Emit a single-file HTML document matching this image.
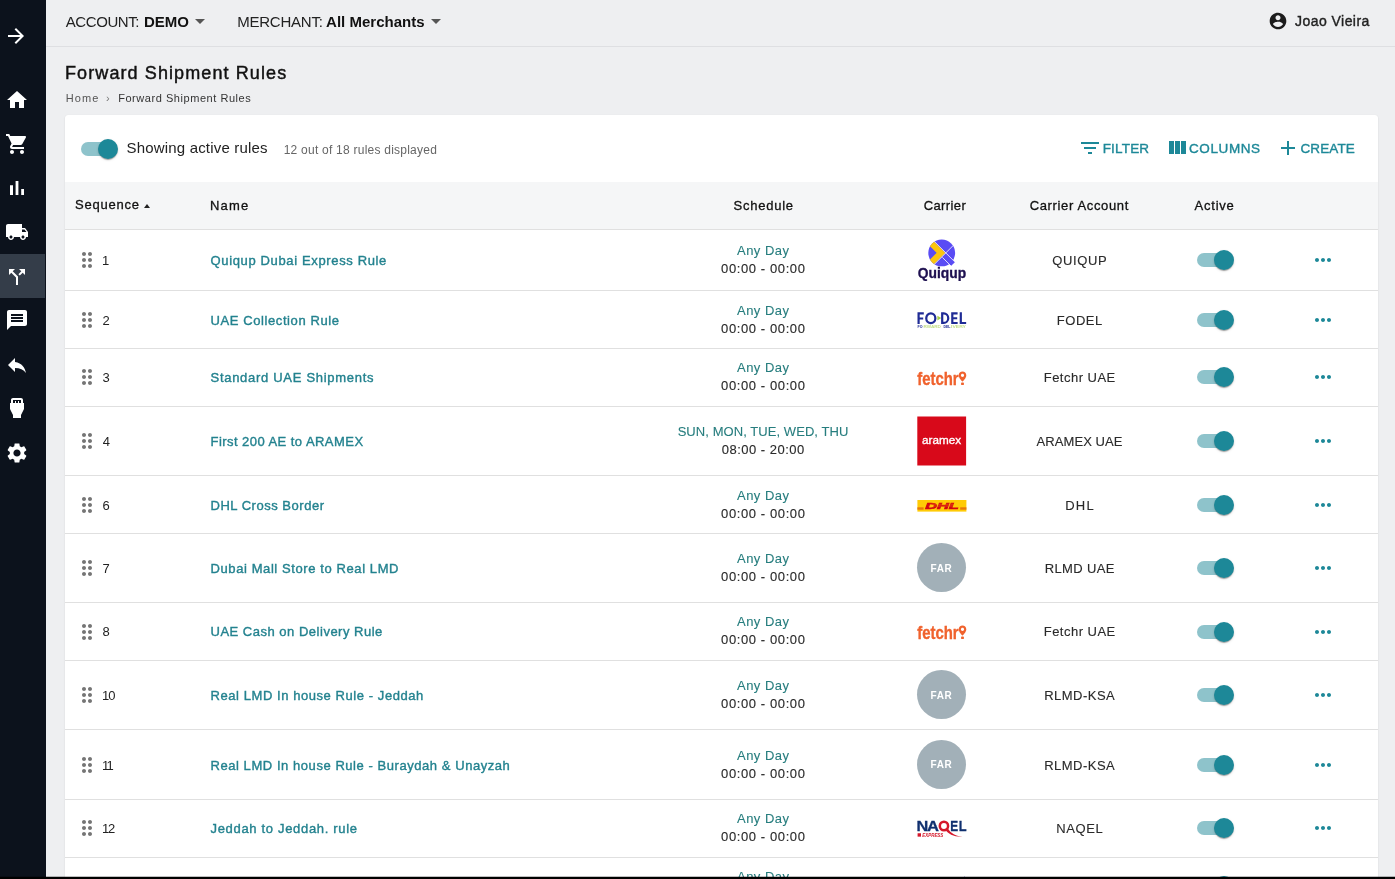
<!DOCTYPE html><html><head><meta charset="utf-8"><title>Forward Shipment Rules</title><style>
*{box-sizing:border-box;margin:0;padding:0}
html,body{width:1395px;height:879px;overflow:hidden}
body{background:#eeeff1;font-family:"Liberation Sans",sans-serif;color:#222;position:relative}
span{white-space:nowrap}
svg{display:block}
.wrap{position:absolute;left:0;top:0;width:1395px;height:879px;will-change:transform;overflow:hidden}
.side{position:absolute;left:0;top:0;width:46px;height:879px;background:#0c121c}
.side .act{position:absolute;left:0;top:254px;width:45px;height:44px;background:#343d49}
.side .ic{position:absolute;width:24px;height:24px}
.top{position:absolute;left:46px;top:0;right:0;height:47px;border-bottom:1px solid #dedfe2}
.top .it{position:absolute;top:0;height:42px;display:flex;align-items:center}
.caret{position:absolute;width:0;height:0;border-left:5px solid transparent;border-right:5px solid transparent;border-top:5px solid #555;top:19px}
h1{position:absolute;left:65px;top:55px;height:26px;line-height:26px;font-weight:400;color:#111}
.crumbs{position:absolute;left:65px;top:90px;height:16px;line-height:16px;color:#555}
.crumbs span{position:absolute;top:0}
.card{position:absolute;left:65px;top:115px;width:1313px;height:800px;background:#fff;border-radius:3px 3px 0 0;box-shadow:0 1px 2px rgba(0,0,0,.10),0 0 1px rgba(0,0,0,.10)}
.toolbar{position:relative;height:67px}
.toolbar .abs{position:absolute}
.thead{position:relative;height:48px;background:#f5f6f7;border-bottom:1px solid #e0e0e0;color:#111}
.thead span.h{position:absolute;top:0;height:47px;display:flex;align-items:center}
.row{position:relative;border-bottom:1px solid #e0e0e0;box-sizing:content-box}
.cell{position:absolute;height:19px;line-height:19px;font-size:13px}
.drag{position:absolute;left:10px}
.seq{left:37.500px;color:#222}
.name{left:145.500px;color:#23828f}
.sched{position:absolute;left:548px;width:300px;text-align:center;height:36px;font-size:13px}
.sched .s1{color:#267d7e;-webkit-text-stroke:0.1px #267d7e;height:18px;line-height:17px}
.sched .s2{color:#2a2a2a;-webkit-text-stroke:0.12px #2a2a2a;height:18px;line-height:17px}
.logo{position:absolute;left:851.500px}
.far{width:49px;height:49px;border-radius:50%;background:#a2b0b8;left:852px;color:#fff;font-weight:700;font-size:10px;letter-spacing:.6px;display:flex;align-items:center;justify-content:center}
.far span{margin-right:-.6px;position:relative;top:.5px;left:-.3px}
.acct{left:914.500px;width:200px;text-align:center;color:#2a2a2a;-webkit-text-stroke:0.12px #2a2a2a}
.rsw{position:absolute;left:1120px}
.more{position:absolute;left:1246px}
.sw{position:relative;display:block;width:58px;height:38px}
.sw .trk{position:absolute;left:12px;top:12px;width:34px;height:14px;border-radius:7px;background:#1d8898;opacity:.5}
.sw .thb{position:absolute;left:29px;top:9px;width:20px;height:20px;border-radius:50%;background:#1d8898;box-shadow:0 2px 1px -1px rgba(0,0,0,.2),0 1px 1px 0 rgba(0,0,0,.14),0 1px 3px 0 rgba(0,0,0,.12)}
.btn{position:absolute;top:21px;height:24px;color:#1d8898;display:flex;align-items:center}
.black{position:absolute;left:0;top:877px;width:1395px;height:2px;background:#000}
.black2{position:absolute;left:0;top:876px;width:1395px;height:1px;background:rgba(0,0,0,.25)}
</style></head><body><div class="wrap">
<div class="side"><div class="act"></div>
<span class="ic" style="left:4.0px;top:24.0px"><svg viewBox="0 0 24 24" width="24" height="24" style=""><path fill="#fff" d="M12 4l-1.41 1.41L16.17 11H4v2h12.17l-5.58 5.59L12 20l8-8z"/></svg></span>
<span class="ic" style="left:5.4px;top:88.4px"><svg viewBox="0 0 24 24" width="24" height="24" style=""><path fill="#fff" d="M10 20v-6h4v6h5v-8h3L12 3 2 12h3v8z"/></svg></span>
<span class="ic" style="left:5.4px;top:132.4px"><svg viewBox="0 0 24 24" width="24" height="24" style=""><path fill="#fff" d="M7 18c-1.1 0-1.99.9-1.99 2S5.9 22 7 22s2-.9 2-2-.9-2-2-2zM1 2v2h2l3.6 7.59-1.35 2.45c-.16.28-.25.61-.25.96 0 1.1.9 2 2 2h12v-2H7.42c-.14 0-.25-.11-.25-.25l.03-.12.9-1.63h7.45c.75 0 1.41-.41 1.75-1.03l3.58-6.49c.08-.14.12-.31.12-.48 0-.55-.45-1-1-1H5.21l-.94-2H1zm16 16c-1.1 0-1.99.9-1.99 2s.89 2 1.99 2 2-.9 2-2-.9-2-2-2z"/></svg></span>
<span class="ic" style="left:5.4px;top:176.4px"><svg viewBox="0 0 24 24" width="24" height="24" style=""><path fill="#fff" d="M5 9.2h3V19H5zM10.6 5h2.8v14h-2.8zm5.6 8H19v6h-2.8z"/></svg></span>
<span class="ic" style="left:5.4px;top:220.4px"><svg viewBox="0 0 24 24" width="24" height="24" style=""><path fill="#fff" d="M20 8h-3V4H3c-1.1 0-2 .9-2 2v11h2c0 1.66 1.34 3 3 3s3-1.34 3-3h6c0 1.66 1.34 3 3 3s3-1.34 3-3h2v-5l-3-4zM6 18.5c-.83 0-1.5-.67-1.5-1.5s.67-1.5 1.5-1.5 1.5.67 1.5 1.5-.67 1.5-1.5 1.5zm13.5-9l1.96 2.5H17V9.5h2.5zm-1.5 9c-.83 0-1.5-.67-1.5-1.5s.67-1.5 1.5-1.5 1.5.67 1.5 1.5-.67 1.5-1.5 1.5z"/></svg></span>
<span class="ic" style="left:5.0px;top:264.7px"><svg viewBox="0 0 24 24" width="24" height="24" style=""><path fill="#fff" d="M14 4l2.29 2.29-2.88 2.88 1.42 1.42 2.88-2.88L20 10V4zm-4 0H4v6l2.29-2.29 4.71 4.7V20h2v-8.41l-5.29-5.3z"/></svg></span>
<span class="ic" style="left:5.4px;top:308.4px"><svg viewBox="0 0 24 24" width="24" height="24" style=""><path fill="#fff" d="M20 2H4c-1.1 0-1.99.9-1.99 2L2 22l4-4h14c1.1 0 2-.9 2-2V4c0-1.1-.9-2-2-2zm-2 12H6v-2h12v2zm0-3H6V9h12v2zm0-3H6V6h12v2z"/></svg></span>
<span class="ic" style="left:5.4px;top:353.4px"><svg viewBox="0 0 24 24" width="24" height="24" style=""><path fill="#fff" d="M10 9V5l-7 7 7 7v-4.1c5 0 8.500 1.600 11 5.100-1-5-4-10-11-11z"/></svg></span>
<span class="ic" style="left:5.4px;top:396.4px"><svg viewBox="0 0 24 24" width="24" height="24" style=""><path fill="#fff" d="M18 7V4c0-1.1-.9-2-2-2H8c-1.100 0-2 .9-2 2v3H5v6l3 6v3h8v-3l3-6V7h-1zM8 4h8v3h-2V5h-1v2h-2V5h-1v2H8V4z"/></svg></span>
<span class="ic" style="left:5.4px;top:441.0px"><svg viewBox="0 0 24 24" width="24" height="24" style=""><path fill="#fff" d="M19.140 12.940c.040-.3.060-.61.060-.94 0-.32-.020-.64-.070-.94l2.030-1.580c.180-.140.230-.410.120-.610l-1.920-3.320c-.120-.220-.370-.290-.590-.220l-2.390.960c-.5-.380-1.030-.7-1.620-.940l-.360-2.540c-.040-.240-.240-.410-.480-.410h-3.840c-.240 0-.430.170-.470.410l-.360 2.540c-.590.240-1.130.570-1.620.940l-2.390-.960c-.220-.080-.470 0-.590.220L2.740 8.870c-.120.210-.080.470.120.610l2.030 1.580c-.050.3-.090.630-.090.940s.020.640.070.940l-2.030 1.580c-.180.140-.230.410-.120.610l1.920 3.320c.120.220.370.290.590.220l2.390-.960c.5.380 1.030.7 1.620.940l.360 2.540c.050.240.240.410.480.410h3.840c.240 0 .440-.170.470-.410l.360-2.540c.590-.240 1.130-.560 1.620-.940l2.390.960c.220.080.470 0 .590-.220l1.920-3.320c.120-.220.070-.470-.120-.610l-2.010-1.580zM12 15.600c-1.980 0-3.600-1.620-3.600-3.600s1.620-3.600 3.600-3.600 3.600 1.620 3.600 3.600-1.620 3.600-3.600 3.600z"/></svg></span>
</div>
<div class="top">
<span class="it" style="left:19.8px"><span style="font-size:15px;font-weight:400;letter-spacing:-0.429px;color:#222;">ACCOUNT:</span></span>
<span class="it" style="left:98.0px"><span style="font-size:15px;font-weight:700;letter-spacing:-0.044px;color:#111;">DEMO</span></span>
<span class="caret" style="left:149.3px"></span>
<span class="it" style="left:191.2px"><span style="font-size:15px;font-weight:400;letter-spacing:-0.229px;color:#222;">MERCHANT:</span></span>
<span class="it" style="left:280.1px"><span style="font-size:15px;font-weight:700;letter-spacing:0.007px;color:#111;">All Merchants</span></span>
<span class="caret" style="left:385.0px"></span>
<span class="it" style="left:1222.0px;top:11px;height:20px"><svg viewBox="0 0 24 24" width="20" height="20" style=""><path fill="#1c1c1c" d="M12 2C6.480 2 2 6.480 2 12s4.480 10 10 10 10-4.480 10-10S17.520 2 12 2zm0 3c1.660 0 3 1.340 3 3s-1.340 3-3 3-3-1.340-3-3 1.340-3 3-3zm0 14.200c-2.500 0-4.710-1.280-6-3.220.030-1.990 4-3.080 6-3.080 1.990 0 5.970 1.090 6 3.080-1.290 1.940-3.500 3.220-6 3.220z"/></svg></span>
<span class="it" style="left:1249.1px"><span style="font-size:14px;font-weight:400;letter-spacing:0.442px;-webkit-text-stroke:0.38px currentColor;color:#222;">Joao Vieira</span></span>
</div>
<h1><span style="font-size:18px;font-weight:400;letter-spacing:1.099px;-webkit-text-stroke:0.45px currentColor;">Forward Shipment Rules</span></h1>
<div class="crumbs"><span style="left:0.800px"><span style="font-size:11px;font-weight:400;letter-spacing:1.058px;">Home</span></span><span style="left:41px;font-size:11px;color:#777">&#8250;</span><span style="left:53.200px;color:#333"><span style="font-size:11px;font-weight:400;letter-spacing:0.55px;">Forward Shipment Rules</span></span></div>
<div class="card">
<div class="toolbar">
<span class="abs" style="left:4px;top:14.500px"><span class="sw "><span class="trk"></span><span class="thb"></span></span></span>
<span class="abs" style="left:61.500px;top:23px;height:20px;line-height:20px;color:#222"><span style="font-size:15px;font-weight:400;letter-spacing:0.18px;">Showing active rules</span></span>
<span class="abs" style="left:218.700px;top:24px;height:20px;line-height:20px;color:#666"><span style="font-size:12px;font-weight:400;letter-spacing:0.237px;">12 out of 18 rules displayed</span></span>
<span class="btn" style="left:1013px"><svg viewBox="0 0 24 24" width="24" height="24" style=""><path fill="#1d8898" d="M10 18h4v-2h-4v2zM3 6v2h18V6H3zm3 7h12v-2H6v2z"/></svg><span style="font-size:13.5px;font-weight:400;letter-spacing:0.173px;-webkit-text-stroke:0.38px currentColor;margin-left:0.700px;">FILTER</span></span>
<span class="btn" style="left:1100.3px"><svg viewBox="0 0 24 24" width="24" height="24" style=""><path fill="#1d8898" d="M10 18h5V5h-5v13zm-6 0h5V5H4v13zM16 5v13h5V5h-5z"/></svg><span style="font-size:13.5px;font-weight:400;letter-spacing:0.603px;-webkit-text-stroke:0.38px currentColor;margin-left:-0.300px;">COLUMNS</span></span>
<span class="btn" style="left:1211.2px"><svg viewBox="0 0 24 24" width="24" height="24" style=""><path fill="#1d8898" d="M19 13h-6v6h-2v-6H5v-2h6V5h2v6h6v2z"/></svg><span style="font-size:13.5px;font-weight:400;letter-spacing:0.134px;-webkit-text-stroke:0.38px currentColor;margin-left:0.200px;">CREATE</span></span>
</div>
<div class="thead">
<span class="h" style="left:10px;top:-1px"><span style="font-size:13px;font-weight:400;letter-spacing:0.768px;-webkit-text-stroke:0.3px currentColor;">Sequence</span><i style="display:inline-block;margin-left:4.500px;margin-top:2px;border-left:3px solid transparent;border-right:3px solid transparent;border-bottom:4px solid #222"></i></span>
<span class="h" style="left:145px"><span style="font-size:13px;font-weight:400;letter-spacing:1.184px;-webkit-text-stroke:0.3px currentColor;">Name</span></span>
<span class="h" style="left:668.6px"><span style="font-size:13px;font-weight:400;letter-spacing:0.746px;-webkit-text-stroke:0.3px currentColor;">Schedule</span></span>
<span class="h" style="left:858.7px"><span style="font-size:13px;font-weight:400;letter-spacing:0.384px;-webkit-text-stroke:0.3px currentColor;">Carrier</span></span>
<span class="h" style="left:964.7px"><span style="font-size:13px;font-weight:400;letter-spacing:0.643px;-webkit-text-stroke:0.3px currentColor;">Carrier Account</span></span>
<span class="h" style="left:1129.5px"><span style="font-size:13px;font-weight:400;letter-spacing:0.786px;-webkit-text-stroke:0.3px currentColor;">Active</span></span>
</div>
<div class="row" style="height:60px"><span class="drag" style="top:18px"><svg viewBox="0 0 24 24" width="24" height="24" style=""><path fill="#757575" d="M11 18c0 1.100-.9 2-2 2s-2-.9-2-2 .9-2 2-2 2 .9 2 2zm-2-8c-1.100 0-2 .9-2 2s.9 2 2 2 2-.9 2-2-.9-2-2-2zm0-6c-1.100 0-2 .9-2 2s.9 2 2 2 2-.9 2-2-.9-2-2-2zm6 4c1.100 0 2-.9 2-2s-.9-2-2-2-2 .9-2 2 .9 2 2 2zm0 2c-1.100 0-2 .9-2 2s.9 2 2 2 2-.9 2-2-.9-2-2-2zm0 6c-1.100 0-2 .9-2 2s.9 2 2 2 2-.9 2-2-.9-2-2-2z"/></svg></span><span class="seq cell" style="top:21px;margin-left:-0.6px;letter-spacing:0px">1</span><a class="name cell" style="top:21px"><span style="font-size:13px;font-weight:400;letter-spacing:0.643px;-webkit-text-stroke:0.38px currentColor;">Quiqup Dubai Express Rule</span></a><div class="sched" style="top:12px"><div class="s1"><span style="font-size:13px;font-weight:400;letter-spacing:0.478px;margin-right:-0.478px;">Any Day</span></div><div class="s2"><span style="font-size:13px;font-weight:400;letter-spacing:0.601px;margin-right:-0.601px;">00:00 - 00:00</span></div></div><svg class="logo" width="50" height="44" viewBox="0 0 50 44" style="top:7.2px">
<defs><clipPath id="qc0"><circle cx="25.6" cy="15" r="13.400"/></clipPath></defs>
<g transform="translate(-0.900 0.900)">
<circle cx="25.6" cy="15" r="13.400" fill="#5a4cf4"/>
<path d="M30.20 15.20 L39.00 24.00 L34.90 28.10 L26.30 19.50z" fill="#5a4cf4"/>
<path d="M26.30 19.50 L34.90 28.10" stroke="#fff" stroke-width="0.800" fill="none"/>
<g clip-path="url(#qc0)">
<path d="M13.86 4.00 L24.86 15.00 L13.86 26.00" fill="none" stroke="#fcc60d" stroke-width="6.200" stroke-linejoin="miter"/>
<path d="M38.70 6.00 L17.70 27.00" stroke="#fff" stroke-width="0.800" fill="none"/>
</g>
<path d="M18.20 3.50 L39.20 24.50" stroke="#fff" stroke-width="0.800" fill="none"/>
</g>
<text x="24.900" y="40.700" text-anchor="middle" font-family="Liberation Sans" font-weight="700" font-size="14" fill="#1e1050" stroke="#1e1050" stroke-width="0.300" textLength="48.400" lengthAdjust="spacingAndGlyphs">Quiqup</text>
</svg><span class="acct cell" style="top:21px"><span style="font-size:13px;font-weight:400;letter-spacing:0.638px;margin-right:-0.638px;">QUIQUP</span></span><span class="rsw" style="top:11px"><span class="sw "><span class="trk"></span><span class="thb"></span></span></span><span class="more" style="top:18px"><svg viewBox="0 0 24 24" width="24" height="24" style=""><path fill="#1d8898" d="M6 10c-1.100 0-2 .9-2 2s.9 2 2 2 2-.9 2-2-.9-2-2-2zm12 0c-1.100 0-2 .9-2 2s.9 2 2 2 2-.9 2-2-.9-2-2-2zm-6 0c-1.100 0-2 .9-2 2s.9 2 2 2 2-.9 2-2-.9-2-2-2z"/></svg></span></div>
<div class="row" style="height:57px"><span class="drag" style="top:17px"><svg viewBox="0 0 24 24" width="24" height="24" style=""><path fill="#757575" d="M11 18c0 1.100-.9 2-2 2s-2-.9-2-2 .9-2 2-2 2 .9 2 2zm-2-8c-1.100 0-2 .9-2 2s.9 2 2 2 2-.9 2-2-.9-2-2-2zm0-6c-1.100 0-2 .9-2 2s.9 2 2 2 2-.9 2-2-.9-2-2-2zm6 4c1.100 0 2-.9 2-2s-.9-2-2-2-2 .9-2 2 .9 2 2 2zm0 2c-1.100 0-2 .9-2 2s.9 2 2 2 2-.9 2-2-.9-2-2-2zm0 6c-1.100 0-2 .9-2 2s.9 2 2 2 2-.9 2-2-.9-2-2-2z"/></svg></span><span class="seq cell" style="top:20px;margin-left:0px;letter-spacing:0px">2</span><a class="name cell" style="top:20px"><span style="font-size:13px;font-weight:400;letter-spacing:0.593px;-webkit-text-stroke:0.38px currentColor;">UAE Collection Rule</span></a><div class="sched" style="top:11px"><div class="s1"><span style="font-size:13px;font-weight:400;letter-spacing:0.478px;margin-right:-0.478px;">Any Day</span></div><div class="s2"><span style="font-size:13px;font-weight:400;letter-spacing:0.601px;margin-right:-0.601px;">00:00 - 00:00</span></div></div><svg class="logo" width="50" height="20" viewBox="0 0 50 20" style="top:18.8px">
<path fill="#1f2b95" d="M0.500 2.350H6.800V4.450H2.700V7.400H6.200V9.400H2.700V14.050H0.500z"/>
<ellipse cx="13.800" cy="8.200" rx="4.550" ry="4.900" fill="none" stroke="#1f2b95" stroke-width="2.250"/>
<path d="M20.400 5.700 L24.200 8.100 L20.400 10.500z" fill="#a6cf43"/>
<path fill="none" stroke="#1f2b95" stroke-width="2.200" d="M25.200 3.450H26.700A4.550 4.750 0 0 1 26.700 12.950H25.200z"/>
<path fill="#1f2b95" d="M34.200 2.350H40.600V4.450H36.400V7.300H40.200V9.300H36.400V11.950H40.650V14.050H34.200z"/>
<path fill="#1f2b95" d="M42.700 2.350H44.900V11.950H49.150V14.050H42.700z"/>
<g font-family="Liberation Sans" font-weight="700" font-size="3.500"><text x="0.500" y="18.100" fill="#1f2b95" textLength="5" lengthAdjust="spacingAndGlyphs">FO</text><text x="6.500" y="18.100" fill="#c3de86" textLength="17.500" lengthAdjust="spacingAndGlyphs">RWARD</text><text x="26.400" y="18.100" fill="#1f2b95" textLength="7" lengthAdjust="spacingAndGlyphs">DEL</text><text x="34" y="18.100" fill="#c3de86" textLength="15" lengthAdjust="spacingAndGlyphs">IVERY</text></g>
</svg><span class="acct cell" style="top:20px"><span style="font-size:13px;font-weight:400;letter-spacing:0.522px;margin-right:-0.522px;">FODEL</span></span><span class="rsw" style="top:10px"><span class="sw "><span class="trk"></span><span class="thb"></span></span></span><span class="more" style="top:17px"><svg viewBox="0 0 24 24" width="24" height="24" style=""><path fill="#1d8898" d="M6 10c-1.100 0-2 .9-2 2s.9 2 2 2 2-.9 2-2-.9-2-2-2zm12 0c-1.100 0-2 .9-2 2s.9 2 2 2 2-.9 2-2-.9-2-2-2zm-6 0c-1.100 0-2 .9-2 2s.9 2 2 2 2-.9 2-2-.9-2-2-2z"/></svg></span></div>
<div class="row" style="height:57px"><span class="drag" style="top:16px"><svg viewBox="0 0 24 24" width="24" height="24" style=""><path fill="#757575" d="M11 18c0 1.100-.9 2-2 2s-2-.9-2-2 .9-2 2-2 2 .9 2 2zm-2-8c-1.100 0-2 .9-2 2s.9 2 2 2 2-.9 2-2-.9-2-2-2zm0-6c-1.100 0-2 .9-2 2s.9 2 2 2 2-.9 2-2-.9-2-2-2zm6 4c1.100 0 2-.9 2-2s-.9-2-2-2-2 .9-2 2 .9 2 2 2zm0 2c-1.100 0-2 .9-2 2s.9 2 2 2 2-.9 2-2-.9-2-2-2zm0 6c-1.100 0-2 .9-2 2s.9 2 2 2 2-.9 2-2-.9-2-2-2z"/></svg></span><span class="seq cell" style="top:19px;margin-left:0px;letter-spacing:0px">3</span><a class="name cell" style="top:19px"><span style="font-size:13px;font-weight:400;letter-spacing:0.709px;-webkit-text-stroke:0.38px currentColor;">Standard UAE Shipments</span></a><div class="sched" style="top:10px"><div class="s1"><span style="font-size:13px;font-weight:400;letter-spacing:0.478px;margin-right:-0.478px;">Any Day</span></div><div class="s2"><span style="font-size:13px;font-weight:400;letter-spacing:0.601px;margin-right:-0.601px;">00:00 - 00:00</span></div></div><svg class="logo" width="51" height="20" viewBox="0 0 51 20" style="top:18.2px">
<g transform="translate(-1 2)">
<text x="1.200" y="15.900" font-family="Liberation Sans" font-weight="700" font-size="17.500" fill="#f0622d" stroke="#f0622d" stroke-width="0.350" textLength="41.400" lengthAdjust="spacingAndGlyphs">fetchr</text>
<path d="M46.500 2.600c-2.100 0-3.800 1.700-3.800 3.800 0 2.700 3.800 6.200 3.800 6.200s3.800-3.500 3.800-6.200c0-2.100-1.700-3.800-3.800-3.800zm0 5.300c-.9 0-1.600-.7-1.600-1.600s.7-1.600 1.600-1.600 1.600.7 1.600 1.600-.7 1.600-1.600 1.600z" fill="#f0622d"/>
<rect x="45.100" y="13.500" width="2.800" height="2.600" rx="0.700" fill="#f0622d"/>
</g></svg><span class="acct cell" style="top:19px"><span style="font-size:13px;font-weight:400;letter-spacing:0.487px;margin-right:-0.487px;">Fetchr UAE</span></span><span class="rsw" style="top:9px"><span class="sw "><span class="trk"></span><span class="thb"></span></span></span><span class="more" style="top:16px"><svg viewBox="0 0 24 24" width="24" height="24" style=""><path fill="#1d8898" d="M6 10c-1.100 0-2 .9-2 2s.9 2 2 2 2-.9 2-2-.9-2-2-2zm12 0c-1.100 0-2 .9-2 2s.9 2 2 2 2-.9 2-2-.9-2-2-2zm-6 0c-1.100 0-2 .9-2 2s.9 2 2 2 2-.9 2-2-.9-2-2-2z"/></svg></span></div>
<div class="row" style="height:68px"><span class="drag" style="top:22px"><svg viewBox="0 0 24 24" width="24" height="24" style=""><path fill="#757575" d="M11 18c0 1.100-.9 2-2 2s-2-.9-2-2 .9-2 2-2 2 .9 2 2zm-2-8c-1.100 0-2 .9-2 2s.9 2 2 2 2-.9 2-2-.9-2-2-2zm0-6c-1.100 0-2 .9-2 2s.9 2 2 2 2-.9 2-2-.9-2-2-2zm6 4c1.100 0 2-.9 2-2s-.9-2-2-2-2 .9-2 2 .9 2 2 2zm0 2c-1.100 0-2 .9-2 2s.9 2 2 2 2-.9 2-2-.9-2-2-2zm0 6c-1.100 0-2 .9-2 2s.9 2 2 2 2-.9 2-2-.9-2-2-2z"/></svg></span><span class="seq cell" style="top:25px;margin-left:0.3px;letter-spacing:0px">4</span><a class="name cell" style="top:25px"><span style="font-size:13px;font-weight:400;letter-spacing:0.452px;-webkit-text-stroke:0.38px currentColor;">First 200 AE to ARAMEX</span></a><div class="sched" style="top:16px"><div class="s1"><span style="font-size:13px;font-weight:400;letter-spacing:0.067px;margin-right:-0.067px;">SUN, MON, TUE, WED, THU</span></div><div class="s2"><span style="font-size:13px;font-weight:400;letter-spacing:0.484px;margin-right:-0.484px;">08:00 - 20:00</span></div></div><svg class="logo" width="50" height="50" viewBox="0 0 50 50" style="top:8.8px">
<rect x="0.300" y="0.500" width="48.800" height="49" fill="#d8091a"/>
<text x="24.600" y="28.100" text-anchor="middle" font-family="Liberation Sans" font-weight="400" font-size="11.800" fill="#fff" stroke="#fff" stroke-width="0.350" textLength="39" lengthAdjust="spacingAndGlyphs">aramex</text>
</svg><span class="acct cell" style="top:25px"><span style="font-size:13px;font-weight:400;letter-spacing:0.092px;margin-right:-0.092px;">ARAMEX UAE</span></span><span class="rsw" style="top:15px"><span class="sw "><span class="trk"></span><span class="thb"></span></span></span><span class="more" style="top:22px"><svg viewBox="0 0 24 24" width="24" height="24" style=""><path fill="#1d8898" d="M6 10c-1.100 0-2 .9-2 2s.9 2 2 2 2-.9 2-2-.9-2-2-2zm12 0c-1.100 0-2 .9-2 2s.9 2 2 2 2-.9 2-2-.9-2-2-2zm-6 0c-1.100 0-2 .9-2 2s.9 2 2 2 2-.9 2-2-.9-2-2-2z"/></svg></span></div>
<div class="row" style="height:57px"><span class="drag" style="top:17px"><svg viewBox="0 0 24 24" width="24" height="24" style=""><path fill="#757575" d="M11 18c0 1.100-.9 2-2 2s-2-.9-2-2 .9-2 2-2 2 .9 2 2zm-2-8c-1.100 0-2 .9-2 2s.9 2 2 2 2-.9 2-2-.9-2-2-2zm0-6c-1.100 0-2 .9-2 2s.9 2 2 2 2-.9 2-2-.9-2-2-2zm6 4c1.100 0 2-.9 2-2s-.9-2-2-2-2 .9-2 2 .9 2 2 2zm0 2c-1.100 0-2 .9-2 2s.9 2 2 2 2-.9 2-2-.9-2-2-2zm0 6c-1.100 0-2 .9-2 2s.9 2 2 2 2-.9 2-2-.9-2-2-2z"/></svg></span><span class="seq cell" style="top:20px;margin-left:0px;letter-spacing:0px">6</span><a class="name cell" style="top:20px"><span style="font-size:13px;font-weight:400;letter-spacing:0.517px;-webkit-text-stroke:0.38px currentColor;">DHL Cross Border</span></a><div class="sched" style="top:11px"><div class="s1"><span style="font-size:13px;font-weight:400;letter-spacing:0.478px;margin-right:-0.478px;">Any Day</span></div><div class="s2"><span style="font-size:13px;font-weight:400;letter-spacing:0.601px;margin-right:-0.601px;">00:00 - 00:00</span></div></div><svg class="logo" width="50" height="14" viewBox="0 0 50 14" style="top:22.2px">
<g transform="translate(-0.400 1)">
<rect x="0.800" y="1" width="49" height="11.600" fill="#ffcb05"/>
<rect x="0.800" y="8.300" width="6.200" height="2.400" fill="#e8780a"/>
<rect x="43.600" y="8.300" width="6.200" height="2.400" fill="#e8780a"/>
<text x="25.300" y="10.300" text-anchor="middle" font-family="Liberation Sans" font-weight="700" font-style="italic" font-size="9.600" fill="#d40511" textLength="33.500" lengthAdjust="spacingAndGlyphs" stroke="#d40511" stroke-width="0.700">DHL</text>
<path d="M13 5.200H38M12 7H37" stroke="#ffcb05" stroke-width="0.450" opacity=".7"/>
</g></svg><span class="acct cell" style="top:20px"><span style="font-size:13px;font-weight:400;letter-spacing:1.212px;margin-right:-1.212px;">DHL</span></span><span class="rsw" style="top:10px"><span class="sw "><span class="trk"></span><span class="thb"></span></span></span><span class="more" style="top:17px"><svg viewBox="0 0 24 24" width="24" height="24" style=""><path fill="#1d8898" d="M6 10c-1.100 0-2 .9-2 2s.9 2 2 2 2-.9 2-2-.9-2-2-2zm12 0c-1.100 0-2 .9-2 2s.9 2 2 2 2-.9 2-2-.9-2-2-2zm-6 0c-1.100 0-2 .9-2 2s.9 2 2 2 2-.9 2-2-.9-2-2-2z"/></svg></span></div>
<div class="row" style="height:68px"><span class="drag" style="top:22px"><svg viewBox="0 0 24 24" width="24" height="24" style=""><path fill="#757575" d="M11 18c0 1.100-.9 2-2 2s-2-.9-2-2 .9-2 2-2 2 .9 2 2zm-2-8c-1.100 0-2 .9-2 2s.9 2 2 2 2-.9 2-2-.9-2-2-2zm0-6c-1.100 0-2 .9-2 2s.9 2 2 2 2-.9 2-2-.9-2-2-2zm6 4c1.100 0 2-.9 2-2s-.9-2-2-2-2 .9-2 2 .9 2 2 2zm0 2c-1.100 0-2 .9-2 2s.9 2 2 2 2-.9 2-2-.9-2-2-2zm0 6c-1.100 0-2 .9-2 2s.9 2 2 2 2-.9 2-2-.9-2-2-2z"/></svg></span><span class="seq cell" style="top:25px;margin-left:0px;letter-spacing:0px">7</span><a class="name cell" style="top:25px"><span style="font-size:13px;font-weight:400;letter-spacing:0.594px;-webkit-text-stroke:0.38px currentColor;">Dubai Mall Store to Real LMD</span></a><div class="sched" style="top:16px"><div class="s1"><span style="font-size:13px;font-weight:400;letter-spacing:0.478px;margin-right:-0.478px;">Any Day</span></div><div class="s2"><span style="font-size:13px;font-weight:400;letter-spacing:0.601px;margin-right:-0.601px;">00:00 - 00:00</span></div></div><div class="logo far" style="top:9.2px"><span>FAR</span></div><span class="acct cell" style="top:25px"><span style="font-size:13px;font-weight:400;letter-spacing:0.356px;margin-right:-0.356px;">RLMD UAE</span></span><span class="rsw" style="top:15px"><span class="sw "><span class="trk"></span><span class="thb"></span></span></span><span class="more" style="top:22px"><svg viewBox="0 0 24 24" width="24" height="24" style=""><path fill="#1d8898" d="M6 10c-1.100 0-2 .9-2 2s.9 2 2 2 2-.9 2-2-.9-2-2-2zm12 0c-1.100 0-2 .9-2 2s.9 2 2 2 2-.9 2-2-.9-2-2-2zm-6 0c-1.100 0-2 .9-2 2s.9 2 2 2 2-.9 2-2-.9-2-2-2z"/></svg></span></div>
<div class="row" style="height:57px"><span class="drag" style="top:17px"><svg viewBox="0 0 24 24" width="24" height="24" style=""><path fill="#757575" d="M11 18c0 1.100-.9 2-2 2s-2-.9-2-2 .9-2 2-2 2 .9 2 2zm-2-8c-1.100 0-2 .9-2 2s.9 2 2 2 2-.9 2-2-.9-2-2-2zm0-6c-1.100 0-2 .9-2 2s.9 2 2 2 2-.9 2-2-.9-2-2-2zm6 4c1.100 0 2-.9 2-2s-.9-2-2-2-2 .9-2 2 .9 2 2 2zm0 2c-1.100 0-2 .9-2 2s.9 2 2 2 2-.9 2-2-.9-2-2-2zm0 6c-1.100 0-2 .9-2 2s.9 2 2 2 2-.9 2-2-.9-2-2-2z"/></svg></span><span class="seq cell" style="top:19px;margin-left:0px;letter-spacing:0px">8</span><a class="name cell" style="top:19px"><span style="font-size:13px;font-weight:400;letter-spacing:0.507px;-webkit-text-stroke:0.38px currentColor;">UAE Cash on Delivery Rule</span></a><div class="sched" style="top:10px"><div class="s1"><span style="font-size:13px;font-weight:400;letter-spacing:0.478px;margin-right:-0.478px;">Any Day</span></div><div class="s2"><span style="font-size:13px;font-weight:400;letter-spacing:0.601px;margin-right:-0.601px;">00:00 - 00:00</span></div></div><svg class="logo" width="51" height="20" viewBox="0 0 51 20" style="top:18.2px">
<g transform="translate(-1 2)">
<text x="1.200" y="15.900" font-family="Liberation Sans" font-weight="700" font-size="17.500" fill="#f0622d" stroke="#f0622d" stroke-width="0.350" textLength="41.400" lengthAdjust="spacingAndGlyphs">fetchr</text>
<path d="M46.500 2.600c-2.100 0-3.800 1.700-3.800 3.800 0 2.700 3.800 6.200 3.800 6.200s3.800-3.500 3.800-6.200c0-2.100-1.700-3.800-3.800-3.800zm0 5.300c-.9 0-1.600-.7-1.600-1.600s.7-1.600 1.600-1.600 1.600.7 1.600 1.600-.7 1.600-1.600 1.600z" fill="#f0622d"/>
<rect x="45.100" y="13.500" width="2.800" height="2.600" rx="0.700" fill="#f0622d"/>
</g></svg><span class="acct cell" style="top:19px"><span style="font-size:13px;font-weight:400;letter-spacing:0.487px;margin-right:-0.487px;">Fetchr UAE</span></span><span class="rsw" style="top:10px"><span class="sw "><span class="trk"></span><span class="thb"></span></span></span><span class="more" style="top:17px"><svg viewBox="0 0 24 24" width="24" height="24" style=""><path fill="#1d8898" d="M6 10c-1.100 0-2 .9-2 2s.9 2 2 2 2-.9 2-2-.9-2-2-2zm12 0c-1.100 0-2 .9-2 2s.9 2 2 2 2-.9 2-2-.9-2-2-2zm-6 0c-1.100 0-2 .9-2 2s.9 2 2 2 2-.9 2-2-.9-2-2-2z"/></svg></span></div>
<div class="row" style="height:68px"><span class="drag" style="top:22px"><svg viewBox="0 0 24 24" width="24" height="24" style=""><path fill="#757575" d="M11 18c0 1.100-.9 2-2 2s-2-.9-2-2 .9-2 2-2 2 .9 2 2zm-2-8c-1.100 0-2 .9-2 2s.9 2 2 2 2-.9 2-2-.9-2-2-2zm0-6c-1.100 0-2 .9-2 2s.9 2 2 2 2-.9 2-2-.9-2-2-2zm6 4c1.100 0 2-.9 2-2s-.9-2-2-2-2 .9-2 2 .9 2 2 2zm0 2c-1.100 0-2 .9-2 2s.9 2 2 2 2-.9 2-2-.9-2-2-2zm0 6c-1.100 0-2 .9-2 2s.9 2 2 2 2-.9 2-2-.9-2-2-2z"/></svg></span><span class="seq cell" style="top:25px;margin-left:-0.6px;letter-spacing:-0.9px">10</span><a class="name cell" style="top:25px"><span style="font-size:13px;font-weight:400;letter-spacing:0.567px;-webkit-text-stroke:0.38px currentColor;">Real LMD In house Rule - Jeddah</span></a><div class="sched" style="top:16px"><div class="s1"><span style="font-size:13px;font-weight:400;letter-spacing:0.478px;margin-right:-0.478px;">Any Day</span></div><div class="s2"><span style="font-size:13px;font-weight:400;letter-spacing:0.601px;margin-right:-0.601px;">00:00 - 00:00</span></div></div><div class="logo far" style="top:9.2px"><span>FAR</span></div><span class="acct cell" style="top:25px"><span style="font-size:13px;font-weight:400;letter-spacing:0.471px;margin-right:-0.471px;">RLMD-KSA</span></span><span class="rsw" style="top:15px"><span class="sw "><span class="trk"></span><span class="thb"></span></span></span><span class="more" style="top:22px"><svg viewBox="0 0 24 24" width="24" height="24" style=""><path fill="#1d8898" d="M6 10c-1.100 0-2 .9-2 2s.9 2 2 2 2-.9 2-2-.9-2-2-2zm12 0c-1.100 0-2 .9-2 2s.9 2 2 2 2-.9 2-2-.9-2-2-2zm-6 0c-1.100 0-2 .9-2 2s.9 2 2 2 2-.9 2-2-.9-2-2-2z"/></svg></span></div>
<div class="row" style="height:69px"><span class="drag" style="top:23px"><svg viewBox="0 0 24 24" width="24" height="24" style=""><path fill="#757575" d="M11 18c0 1.100-.9 2-2 2s-2-.9-2-2 .9-2 2-2 2 .9 2 2zm-2-8c-1.100 0-2 .9-2 2s.9 2 2 2 2-.9 2-2-.9-2-2-2zm0-6c-1.100 0-2 .9-2 2s.9 2 2 2 2-.9 2-2-.9-2-2-2zm6 4c1.100 0 2-.9 2-2s-.9-2-2-2-2 .9-2 2 .9 2 2 2zm0 2c-1.100 0-2 .9-2 2s.9 2 2 2 2-.9 2-2-.9-2-2-2zm0 6c-1.100 0-2 .9-2 2s.9 2 2 2 2-.9 2-2-.9-2-2-2z"/></svg></span><span class="seq cell" style="top:26px;margin-left:-0.6px;letter-spacing:-1.7px">11</span><a class="name cell" style="top:26px"><span style="font-size:13px;font-weight:400;letter-spacing:0.555px;-webkit-text-stroke:0.38px currentColor;">Real LMD In house Rule - Buraydah &amp; Unayzah</span></a><div class="sched" style="top:17px"><div class="s1"><span style="font-size:13px;font-weight:400;letter-spacing:0.478px;margin-right:-0.478px;">Any Day</span></div><div class="s2"><span style="font-size:13px;font-weight:400;letter-spacing:0.601px;margin-right:-0.601px;">00:00 - 00:00</span></div></div><div class="logo far" style="top:9.8px"><span>FAR</span></div><span class="acct cell" style="top:26px"><span style="font-size:13px;font-weight:400;letter-spacing:0.471px;margin-right:-0.471px;">RLMD-KSA</span></span><span class="rsw" style="top:16px"><span class="sw "><span class="trk"></span><span class="thb"></span></span></span><span class="more" style="top:23px"><svg viewBox="0 0 24 24" width="24" height="24" style=""><path fill="#1d8898" d="M6 10c-1.100 0-2 .9-2 2s.9 2 2 2 2-.9 2-2-.9-2-2-2zm12 0c-1.100 0-2 .9-2 2s.9 2 2 2 2-.9 2-2-.9-2-2-2zm-6 0c-1.100 0-2 .9-2 2s.9 2 2 2 2-.9 2-2-.9-2-2-2z"/></svg></span></div>
<div class="row" style="height:57px"><span class="drag" style="top:16px"><svg viewBox="0 0 24 24" width="24" height="24" style=""><path fill="#757575" d="M11 18c0 1.100-.9 2-2 2s-2-.9-2-2 .9-2 2-2 2 .9 2 2zm-2-8c-1.100 0-2 .9-2 2s.9 2 2 2 2-.9 2-2-.9-2-2-2zm0-6c-1.100 0-2 .9-2 2s.9 2 2 2 2-.9 2-2-.9-2-2-2zm6 4c1.100 0 2-.9 2-2s-.9-2-2-2-2 .9-2 2 .9 2 2 2zm0 2c-1.100 0-2 .9-2 2s.9 2 2 2 2-.9 2-2-.9-2-2-2zm0 6c-1.100 0-2 .9-2 2s.9 2 2 2 2-.9 2-2-.9-2-2-2z"/></svg></span><span class="seq cell" style="top:19px;margin-left:-0.6px;letter-spacing:-1.2px">12</span><a class="name cell" style="top:19px"><span style="font-size:13px;font-weight:400;letter-spacing:0.68px;-webkit-text-stroke:0.38px currentColor;">Jeddah to Jeddah. rule</span></a><div class="sched" style="top:10px"><div class="s1"><span style="font-size:13px;font-weight:400;letter-spacing:0.478px;margin-right:-0.478px;">Any Day</span></div><div class="s2"><span style="font-size:13px;font-weight:400;letter-spacing:0.601px;margin-right:-0.601px;">00:00 - 00:00</span></div></div><svg class="logo" width="50" height="20" viewBox="0 0 50 20" style="top:18.8px">
<text transform="translate(-0.56 12.30) scale(1.627 1.551)" font-family="Liberation Sans" font-weight="700" font-size="10" fill="#10306f" stroke="#10306f" stroke-width="0.193">N</text>
<text transform="translate(9.97 12.30) scale(1.662 1.551)" font-family="Liberation Sans" font-weight="700" font-size="10" fill="#10306f" stroke="#10306f" stroke-width="0.193">A</text>
<ellipse cx="26.950" cy="7" rx="4.150" ry="4.300" fill="none" stroke="#d5182b" stroke-width="2.500"/>
<path d="M27.800 10 C31 15.300 38 18.300 46.300 17.600 C39 17.200 33.500 14.300 30.800 9.200z" fill="#d5182b"/>
<text transform="translate(33.13 12.30) scale(1.186 1.551)" font-family="Liberation Sans" font-weight="700" font-size="10" fill="#10306f" stroke="#10306f" stroke-width="0.193">E</text>
<text transform="translate(41.86 12.30) scale(1.288 1.551)" font-family="Liberation Sans" font-weight="700" font-size="10" fill="#10306f" stroke="#10306f" stroke-width="0.193">L</text>
<rect x="0.600" y="14.250" width="3.400" height="3.400" fill="#d5182b"/>
<text x="5.300" y="17.650" font-family="Liberation Sans" font-weight="700" font-style="italic" font-size="5" fill="#d5182b" textLength="21" lengthAdjust="spacingAndGlyphs">EXPRESS</text>
</svg><span class="acct cell" style="top:19px"><span style="font-size:13px;font-weight:400;letter-spacing:0.64px;margin-right:-0.64px;">NAQEL</span></span><span class="rsw" style="top:9px"><span class="sw "><span class="trk"></span><span class="thb"></span></span></span><span class="more" style="top:16px"><svg viewBox="0 0 24 24" width="24" height="24" style=""><path fill="#1d8898" d="M6 10c-1.100 0-2 .9-2 2s.9 2 2 2 2-.9 2-2-.9-2-2-2zm12 0c-1.100 0-2 .9-2 2s.9 2 2 2 2-.9 2-2-.9-2-2-2zm-6 0c-1.100 0-2 .9-2 2s.9 2 2 2 2-.9 2-2-.9-2-2-2z"/></svg></span></div>
<div class="row" style="height:57px"><span class="drag" style="top:16px"><svg viewBox="0 0 24 24" width="24" height="24" style=""><path fill="#757575" d="M11 18c0 1.100-.9 2-2 2s-2-.9-2-2 .9-2 2-2 2 .9 2 2zm-2-8c-1.100 0-2 .9-2 2s.9 2 2 2 2-.9 2-2-.9-2-2-2zm0-6c-1.100 0-2 .9-2 2s.9 2 2 2 2-.9 2-2-.9-2-2-2zm6 4c1.100 0 2-.9 2-2s-.9-2-2-2-2 .9-2 2 .9 2 2 2zm0 2c-1.100 0-2 .9-2 2s.9 2 2 2 2-.9 2-2-.9-2-2-2zm0 6c-1.100 0-2 .9-2 2s.9 2 2 2 2-.9 2-2-.9-2-2-2z"/></svg></span><span class="seq cell" style="top:19px;margin-left:-0.6px;letter-spacing:-1.2px">13</span><div class="sched" style="top:10px"><div class="s1"><span style="font-size:13px;font-weight:400;letter-spacing:0.478px;margin-right:-0.478px;">Any Day</span></div><div class="s2"><span style="font-size:13px;font-weight:400;letter-spacing:0.601px;margin-right:-0.601px;">00:00 - 00:00</span></div></div><svg class="logo" width="50" height="6" viewBox="0 0 50 6" style="top:16.500px"><path d="M47.500 1.200 L49 4.500 L46.200 4.500z" fill="#2a2ab8"/></svg><span class="rsw" style="top:9px"><span class="sw "><span class="trk"></span><span class="thb"></span></span></span><span class="more" style="top:16px"><svg viewBox="0 0 24 24" width="24" height="24" style=""><path fill="#1d8898" d="M6 10c-1.100 0-2 .9-2 2s.9 2 2 2 2-.9 2-2-.9-2-2-2zm12 0c-1.100 0-2 .9-2 2s.9 2 2 2 2-.9 2-2-.9-2-2-2zm-6 0c-1.100 0-2 .9-2 2s.9 2 2 2 2-.9 2-2-.9-2-2-2z"/></svg></span></div>
</div>
<div class="black2"></div><div class="black"></div>
</div></body></html>
